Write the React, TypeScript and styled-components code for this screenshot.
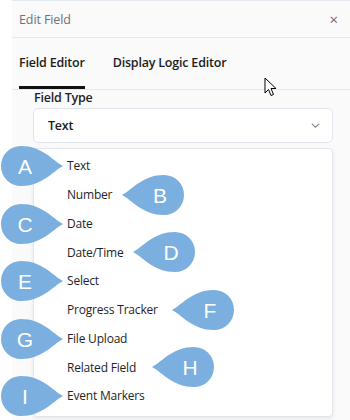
import styled, { createGlobalStyle } from "styled-components"

const GlobalStyle = createGlobalStyle`
  body {
    margin: 0;
    padding: 0;
    background: #ffffff;
    font-family: "Open Sans", "Noto Sans", sans-serif;
    color: #1f2328;
  }
`

const Page = styled.div`
  position: relative;
  width: 350px;
  height: 420px;
  overflow: hidden;
  background: #ffffff;
`

const Drawer = styled.div`
  margin-left: 12px;
  height: 420px;
  background: #fafafa;
  border-top: 1px solid #e4e8ef;
  box-sizing: border-box;
`

const Header = styled.div`
  height: 36px;
  display: flex;
  align-items: center;
  justify-content: space-between;
  padding: 0 12px 0 7px;
  border-bottom: 1px solid #e4e8ef;
`

const HeaderTitle = styled.span`
  font-size: 12.5px;
  letter-spacing: -0.1px;
  color: #6b7280;
`

const CloseButton = styled.span`
  font-size: 15px;
  color: #6b6f78;
  line-height: 1;
`

const TabBar = styled.div`
  display: flex;
  gap: 28px;
  padding: 0 7px;
  border-bottom: 1px solid #e4e8ef;
`

const Tab = styled.div<{ active?: boolean }>`
  height: 51px;
  box-sizing: border-box;
  display: flex;
  align-items: center;
  font-size: 12.5px;
  font-weight: 600;
  letter-spacing: -0.2px;
  color: #1a1d21;
  border-bottom: 3px solid ${(p) => (p.active ? "#111111" : "transparent")};
`

const Body = styled.div`
  padding: 0 17px 0 21px;
`

const Label = styled.div`
  height: 14px;
  display: flex;
  align-items: center;
  padding-left: 1px;
  font-size: 12.5px;
  font-weight: 600;
  letter-spacing: -0.2px;
  color: #1f2328;
`

const Select = styled.div`
  margin-top: 4px;
  height: 35px;
  box-sizing: border-box;
  display: flex;
  align-items: center;
  justify-content: space-between;
  padding: 0 12px 0 14px;
  background: #ffffff;
  border: 1px solid #e1e5ec;
  border-radius: 5px;
  font-size: 12.5px;
  font-weight: 600;
  letter-spacing: -0.2px;
  color: #1a1d21;
`

const Menu = styled.div`
  margin-top: 5px;
  padding: 2.5px 0 5.5px;
  background: #ffffff;
  border: 1px solid #e1e5ec;
  border-radius: 4px;
  box-shadow: 0 2px 4px rgba(30, 40, 60, 0.08);
`

const Option = styled.div`
  height: 28.75px;
  display: flex;
  align-items: center;
  padding-left: 33px;
  font-size: 12px;
  letter-spacing: -0.2px;
  color: #1f2328;
`

const Marker = styled.svg<{ x: number; y: number }>`
  position: absolute;
  left: ${(p) => p.x}px;
  top: ${(p) => p.y - 21}px;
  width: 64px;
  height: 42px;
  overflow: visible;
`

const Cursor = styled.svg`
  position: absolute;
  left: 264px;
  top: 77px;
  width: 14px;
  height: 21px;
`

const Chevron = () => (
  <svg width="9" height="5" viewBox="0 0 9 5">
    <path d="M0.8 0.8l3.7 3.4 3.7-3.4" fill="none" stroke="#80858e" strokeWidth="1.1" />
  </svg>
)

const options = [
  "Text",
  "Number",
  "Date",
  "Date/Time",
  "Select",
  "Progress Tracker",
  "File Upload",
  "Related Field",
  "Event Markers",
]

// label callouts: right-pointing ones sit at the left edge, left-pointing ones after the text
const markers = [
  { letter: "A", x: 0, dir: "right" },
  { letter: "B", x: 121, dir: "left" },
  { letter: "C", x: 0, dir: "right" },
  { letter: "D", x: 132, dir: "left" },
  { letter: "E", x: 0, dir: "right" },
  { letter: "F", x: 171, dir: "left" },
  { letter: "G", x: 0, dir: "right" },
  { letter: "H", x: 151, dir: "left" },
  { letter: "I", x: 0, dir: "right" },
]

const rightDrop = "M63 21 C52 15 42 1 21 1 A20 20 0 0 0 21 41 C42 41 52 27 63 21 Z"
const leftDrop = "M1 21 C12 15 22 1 43 1 A20 20 0 0 1 43 41 C22 41 12 27 1 21 Z"

function Callout({ letter, x, y, dir }: { letter: string; x: number; y: number; dir: string }) {
  const right = dir === "right"
  return (
    <Marker x={x} y={y} viewBox="0 0 64 42">
      <path d={right ? rightDrop : leftDrop} fill="#7aafdf" />
      <text
        x={right ? 25 : 39}
        y={28.5}
        textAnchor="middle"
        fill="#ffffff"
        fontSize="21"
        fontFamily="'Liberation Sans', Arial, sans-serif"
      >
        {letter}
      </text>
    </Marker>
  )
}

export default function App() {
  return (
    <>
      <GlobalStyle />
      <Page>
        <Drawer>
          <Header>
            <HeaderTitle>Edit Field</HeaderTitle>
            <CloseButton>×</CloseButton>
          </Header>
          <TabBar>
            <Tab active>Field Editor</Tab>
            <Tab>Display Logic Editor</Tab>
          </TabBar>
          <Body>
            <Label>Field Type</Label>
            <Select>
              <span>Text</span>
              <Chevron />
            </Select>
            <Menu>
              {options.map((o) => (
                <Option key={o}>{o}</Option>
              ))}
            </Menu>
          </Body>
        </Drawer>
        {markers.map((m, i) => (
          <Callout key={m.letter} letter={m.letter} x={m.x} y={166 + i * 28.75} dir={m.dir} />
        ))}
        <Cursor viewBox="0 0 14 21">
          <path
            d="M1 1 L1 16 L4.5 12.5 L7 18.5 L9.5 17.5 L7 11.5 L12 11.5 Z"
            fill="#ffffff"
            stroke="#000000"
            strokeWidth="1"
            strokeLinejoin="miter"
          />
        </Cursor>
      </Page>
    </>
  )
}
